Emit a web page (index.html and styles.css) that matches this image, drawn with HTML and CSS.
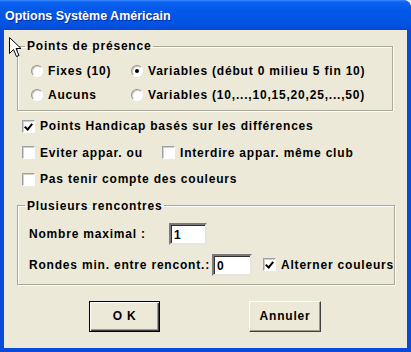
FILE: index.html
```html
<!DOCTYPE html>
<html lang="fr">
<head>
  <meta charset="UTF-8">
  <title>Options Système Américain</title>
  <link rel="stylesheet" href="styles.css">
</head>
<body>

<div class="window">
  <div class="titlebar">
    <span class="title">Options Système Américain</span>
  </div>

  <div class="client">
    <fieldset class="group presence">
      <legend>Points de présence</legend>
      <div class="radio-grid">
        <label class="opt"><span class="radio"></span>Fixes (10)</label>
        <label class="opt"><span class="radio on"></span>Variables (début 0 milieu 5 fin 10)</label>
        <label class="opt"><span class="radio"></span>Aucuns</label>
        <label class="opt"><span class="radio"></span>Variables (10,...,10,15,20,25,...,50)</label>
      </div>
    </fieldset>

    <div class="checks">
      <div class="check-row">
        <label class="opt"><span class="check on"></span>Points Handicap basés sur les différences</label>
      </div>
      <div class="check-row">
        <label class="opt col-a"><span class="check"></span>Eviter appar. ou</label>
        <label class="opt"><span class="check"></span>Interdire appar. même club</label>
      </div>
      <div class="check-row">
        <label class="opt"><span class="check"></span>Pas tenir compte des couleurs</label>
      </div>
    </div>

    <fieldset class="group meetings">
      <legend>Plusieurs rencontres</legend>
      <div class="field-row">
        <span class="field-label first">Nombre maximal :</span>
        <span class="textbox narrow">1</span>
      </div>
      <div class="field-row">
        <span class="field-label second">Rondes min. entre rencont.:</span>
        <span class="textbox">0</span>
        <label class="opt alt"><span class="check on"></span>Alterner couleurs</label>
      </div>
    </fieldset>

    <div class="buttons">
      <button class="btn default">O K</button>
      <button class="btn">Annuler</button>
    </div>
  </div>

  <svg class="cursor" width="13" height="21" viewBox="0 0 13 21">
    <path d="M0.5 0.5 L0.5 16.5 L4.5 12.5 L7.5 19.5 L10 18.5 L7 11.5 L12 11.5 Z" fill="#fff" stroke="#000" stroke-width="1"/>
  </svg>
</div>

</body>
</html>
```

FILE: styles.css
```css
body {
  margin: 0;
  background: #ece9d8;
  font-family: "Liberation Sans", Arial, sans-serif;
  font-weight: bold;
  font-size: 12px;
  letter-spacing: 0.8px;
  color: #000;
}

.window {
  position: relative;
  display: flex;
  flex-direction: column;
  width: 411px;
  height: 352px;
  box-sizing: border-box;
  background: #0a4ad8;
  border-radius: 0 8px 0 0;
  overflow: hidden;
}

.titlebar {
  height: 30px;
  flex: none;
  display: flex;
  align-items: center;
  padding-left: 5px;
  background: linear-gradient(#3d8cff 0, #0c62f0 2px, #0458e8 35%, #0254e2 80%, #0549d6 100%);
}

.title {
  color: #fff;
  font-size: 12.5px;
  letter-spacing: 0;
  text-shadow: 1px 1px 0 #0a2a9a;
  margin-top: 1px;
}

.client {
  flex: 1;
  margin: 0 4px 4px;
  background: #ece9d8;
  padding: 0 14px 0 13px;
}

/* group boxes */
.group {
  margin: 9px 0 0;
  border: 1px solid #aca899;
  box-shadow: inset 1px 1px 0 #fff, 1px 1px 0 #fff;
  padding: 0;
}

.group legend {
  margin-left: 7px;
  padding: 0 2px;
  line-height: 14px;
}

.opt {
  display: flex;
  align-items: center;
  gap: 5px;
  white-space: nowrap;
}

.radio-grid {
  display: grid;
  grid-template-columns: 100px auto;
  grid-auto-rows: 24px;
  padding: 6px 0 3px 13px;
}

.radio {
  position: relative;
  width: 12px;
  height: 12px;
  box-sizing: border-box;
  border-radius: 50%;
  background: #fff;
  border: 1px solid;
  border-color: #9a968a #fff #fff #9a968a;
  box-shadow: inset 1px 1px 0 #d0cdc0;
}

.radio.on::after {
  content: "";
  position: absolute;
  left: 3px;
  top: 3px;
  width: 4px;
  height: 4px;
  border-radius: 50%;
  background: #000;
}

/* checkboxes */
.checks {
  margin-top: 2px;
  padding-left: 5px;
}

.check-row {
  display: flex;
  height: 26.5px;
  align-items: center;
}

.col-a {
  width: 140px;
}

.check {
  position: relative;
  width: 13px;
  height: 13px;
  box-sizing: border-box;
  background: #fff;
  border: 1px solid;
  border-color: #a0a0a0 #fff #fff #a0a0a0;
  box-shadow: inset 1px 1px 0 #d4d0c8;
}

.check.on::after {
  content: "";
  position: absolute;
  left: 3px;
  top: 1px;
  width: 3px;
  height: 6px;
  border: solid #000;
  border-width: 0 2px 2px 0;
  transform: rotate(40deg);
}

/* plusieurs rencontres */
.meetings {
  margin-top: 6px;
  padding: 10px 0 8px;
}

.field-row {
  display: flex;
  align-items: center;
  height: 22px;
  padding-left: 11px;
}

.field-row + .field-row {
  margin-top: 9px;
}

.field-label.first {
  width: 140px;
}

.field-label.second {
  width: 183px;
}

.textbox {
  width: 40px;
  height: 22px;
  box-sizing: border-box;
  background: #fff;
  border: 2px solid;
  border-color: #7a7a7a #e8e6dc #e8e6dc #7a7a7a;
  box-shadow: inset 1px 1px 0 #303030;
  padding: 3px 0 0 3px;
  line-height: 14px;
}

.textbox.narrow {
  width: 38px;
}

.alt {
  margin-left: 11px;
}

/* buttons */
.buttons {
  display: flex;
  gap: 89px;
  margin-top: 16px;
  padding-left: 72px;
}

.btn {
  width: 72px;
  height: 31px;
  font: inherit;
  letter-spacing: inherit;
  color: #000;
  background: #ece9d8;
  border: 1px solid;
  border-color: #fff #404040 #404040 #fff;
  box-shadow: inset -1px -1px 0 #9d9a8c;
  padding: 0;
}

.btn.default {
  width: 71px;
  border: 1px solid #000;
  box-shadow: inset 1px 1px 0 #fff, inset -1px -1px 0 #404040, inset -2px -2px 0 #9d9a8c;
}

.cursor {
  position: absolute;
  left: 9px;
  top: 37px;
}
```
